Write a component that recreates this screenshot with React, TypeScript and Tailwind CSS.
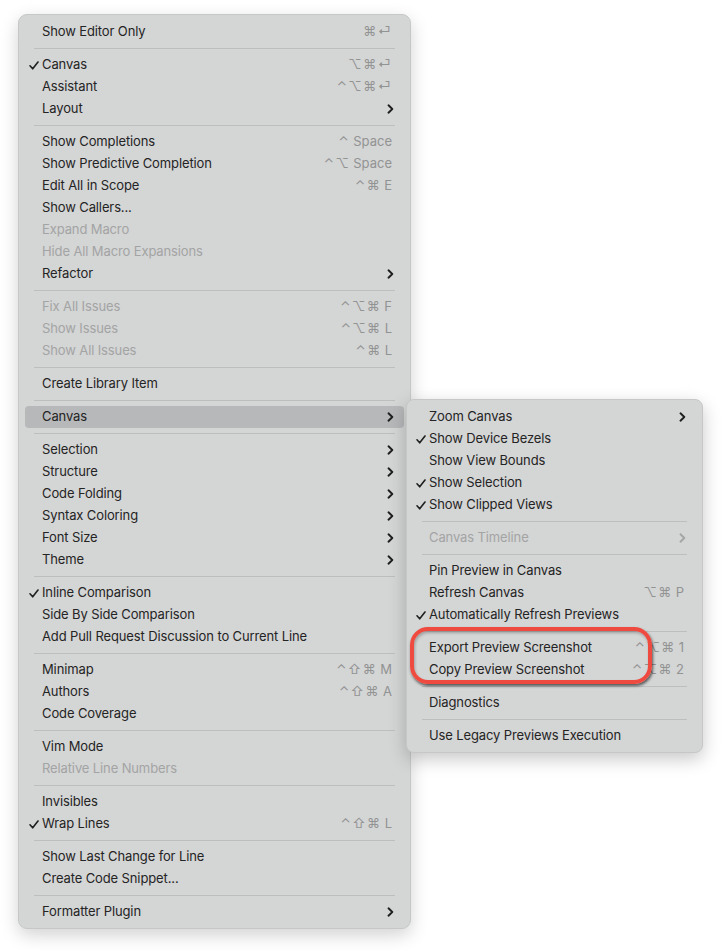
import React from "react";

type Row =
  | "sep"
  | {
      label: string;
      check?: boolean;
      keys?: string;
      sub?: boolean;
      off?: boolean;
      active?: boolean;
    };

const mainItems: Row[] = [
  { label: "Show Editor Only", keys: "⌘⏎" },
  "sep",
  { label: "Canvas", check: true, keys: "⌥⌘⏎" },
  { label: "Assistant", keys: "⌃⌥⌘⏎" },
  { label: "Layout", sub: true },
  "sep",
  { label: "Show Completions", keys: "⌃ Space" },
  { label: "Show Predictive Completion", keys: "⌃⌥ Space" },
  { label: "Edit All in Scope", keys: "⌃⌘E" },
  { label: "Show Callers..." },
  { label: "Expand Macro", off: true },
  { label: "Hide All Macro Expansions", off: true },
  { label: "Refactor", sub: true },
  "sep",
  { label: "Fix All Issues", off: true, keys: "⌃⌥⌘F" },
  { label: "Show Issues", off: true, keys: "⌃⌥⌘L" },
  { label: "Show All Issues", off: true, keys: "⌃⌘L" },
  "sep",
  { label: "Create Library Item" },
  "sep",
  { label: "Canvas", sub: true, active: true },
  "sep",
  { label: "Selection", sub: true },
  { label: "Structure", sub: true },
  { label: "Code Folding", sub: true },
  { label: "Syntax Coloring", sub: true },
  { label: "Font Size", sub: true },
  { label: "Theme", sub: true },
  "sep",
  { label: "Inline Comparison", check: true },
  { label: "Side By Side Comparison" },
  { label: "Add Pull Request Discussion to Current Line" },
  "sep",
  { label: "Minimap", keys: "⌃⇧⌘M" },
  { label: "Authors", keys: "⌃⇧⌘A" },
  { label: "Code Coverage" },
  "sep",
  { label: "Vim Mode" },
  { label: "Relative Line Numbers", off: true },
  "sep",
  { label: "Invisibles" },
  { label: "Wrap Lines", check: true, keys: "⌃⇧⌘L" },
  "sep",
  { label: "Show Last Change for Line" },
  { label: "Create Code Snippet..." },
  "sep",
  { label: "Formatter Plugin", sub: true },
];

const canvasItems: Row[] = [
  { label: "Zoom Canvas", sub: true },
  { label: "Show Device Bezels", check: true },
  { label: "Show View Bounds" },
  { label: "Show Selection", check: true },
  { label: "Show Clipped Views", check: true },
  "sep",
  { label: "Canvas Timeline", sub: true, off: true },
  "sep",
  { label: "Pin Preview in Canvas" },
  { label: "Refresh Canvas", keys: "⌥⌘P" },
  { label: "Automatically Refresh Previews", check: true },
  "sep",
  { label: "Export Preview Screenshot", keys: "⌃⌥⌘1" },
  { label: "Copy Preview Screenshot", keys: "⌃⌥⌘2" },
  "sep",
  { label: "Diagnostics" },
  "sep",
  { label: "Use Legacy Previews Execution" },
];

const Check = () => (
  <svg width="10" height="9" viewBox="0 0 10 9" fill="none">
    <path d="M1 4.8 L3.7 7.8 L9 1" stroke="#1f1f1f" strokeWidth="1.6" strokeLinecap="round" strokeLinejoin="round" />
  </svg>
);

const Chevron = ({ off }: { off?: boolean }) => (
  <svg width="7" height="10" viewBox="0 0 7 10" fill="none">
    <path
      d="M1.5 1.3 L5.3 5 L1.5 8.7"
      stroke={off ? "#a4a5a5" : "#1f1f1f"}
      strokeWidth="1.9"
      strokeLinecap="round"
      strokeLinejoin="round"
    />
  </svg>
);

// modifiers (and return) get spaced out, the key name itself stays normal
function Keys({ keys }: { keys: string }) {
  const m = keys.match(/^([⌃⌥⇧⌘⏎]*)\s?(.*)$/);
  const mods = m ? m[1] : "";
  const key = m ? m[2] : keys;
  return (
    <span className="flex items-center gap-[3px] whitespace-nowrap pr-[2px] text-[#929393]">
      {mods ? <span className="tracking-[1.5px]">{mods}</span> : null}
      {key ? <span>{key}</span> : null}
    </span>
  );
}

function Menu({ items, tight }: { items: Row[]; tight?: boolean }) {
  return (
    <div className="flex flex-col py-[6px] pb-[5px]">
      {items.map((it, i) => {
        if (it === "sep") {
          return <div key={i} className="mx-[15px] my-[5px] h-px bg-[#bdbebe]" />;
        }
        return (
          <div
            key={i}
            className={`mx-[6px] flex h-[22px] items-center rounded-[4px] pr-[10px] ${
              tight ? "pl-[3px]" : "pl-[4px]"
            } ${it.active ? "bg-[#b6b8b9]" : ""}`}
          >
            <span className="flex w-[13px] items-center">{it.check ? <Check /> : null}</span>
            <span
              className={`flex-1 whitespace-nowrap tracking-[-0.12px] ${
                it.off ? "text-[#a3a4a4]" : "text-[#242424]"
              }`}
            >
              {it.label}
            </span>
            {it.keys ? <Keys keys={it.keys} /> : null}
            {it.sub ? <Chevron off={it.off} /> : null}
          </div>
        );
      })}
    </div>
  );
}

export default function App() {
  return (
    <div
      className="relative h-[950px] w-[722px] overflow-hidden bg-white text-[13px]"
      style={{ fontFamily: "Inter, 'DejaVu Sans', sans-serif" }}
    >
      <div className="ml-[18px] mt-[14px] w-[393px] rounded-[9px] border border-[#c6c7c7] bg-[#d4d5d5] shadow-[0_6px_18px_rgba(0,0,0,0.18)]">
        <Menu items={mainItems} />
      </div>

      <div className="absolute left-[406px] top-[399px] w-[297px] rounded-[8px] border border-[#c6c7c7] bg-[#d4d5d5] shadow-[0_6px_18px_rgba(0,0,0,0.22)]">
        <Menu items={canvasItems} tight />
      </div>

      <div className="absolute left-[410px] top-[627px] h-[57px] w-[242px] rounded-[18px] border-[4px] border-[#ef4a3f] shadow-[1px_2px_3px_rgba(0,0,0,0.6),inset_1px_2px_3px_rgba(0,0,0,0.25)]" />
    </div>
  );
}
